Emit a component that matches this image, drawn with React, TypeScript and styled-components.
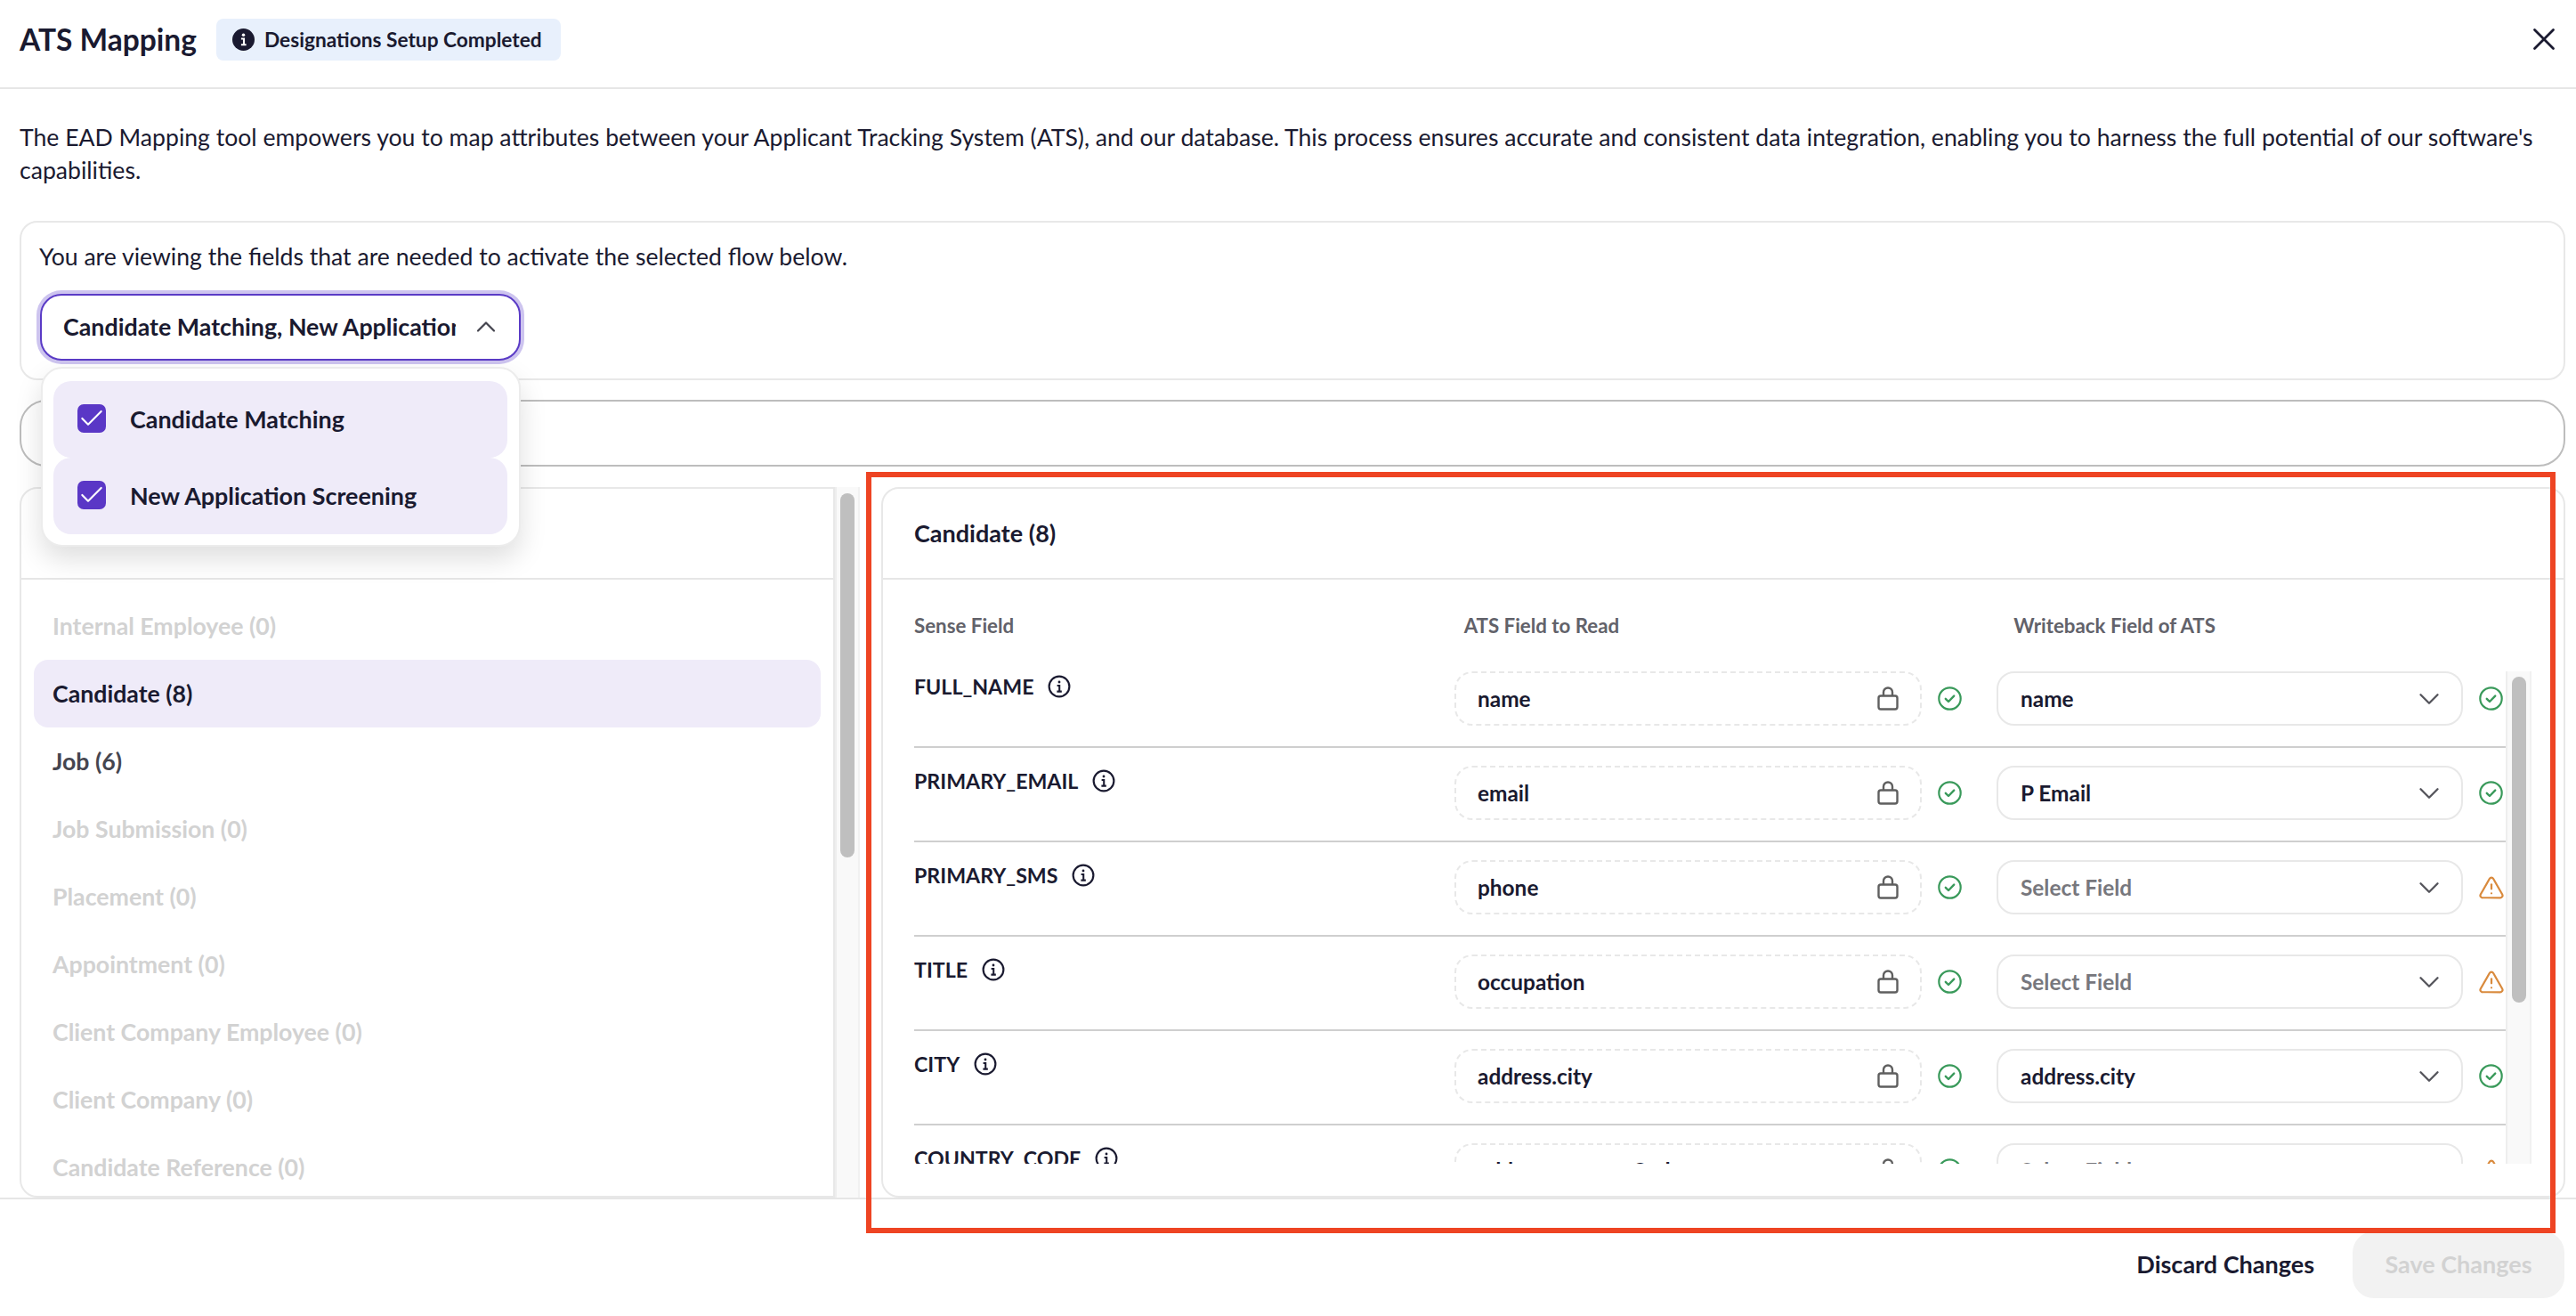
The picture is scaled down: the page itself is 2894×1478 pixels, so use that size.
import React from "react";
import styled, { createGlobalStyle } from "styled-components";
import { X, ChevronUp, ChevronDown, TriangleAlert, Check } from "lucide-react";

const Global = createGlobalStyle`
  html, body { margin: 0; padding: 0; background: #fff; }
  * { box-sizing: border-box; }
  svg { flex: none; }
  body { font-family: "Lato", "Noto Sans", sans-serif; color: #1a1a30; }
`;

const Page = styled.div`
  position: relative;
  width: 2894px;
  height: 1478px;
  display: flex;
  flex-direction: column;
  overflow: hidden;
  background: #fff;
`;

const Header = styled.header`
  flex: 0 0 100px;
  display: flex;
  align-items: center;
  padding: 0 15px 10px 22px;
  border-bottom: 2px solid #e6e6e6;
`;
const Title = styled.h1`
  margin: 0;
  font-size: 33.5px;
  font-weight: 700;
  width: 198px;
  white-space: nowrap;
`;
const Badge = styled.div`
  margin-left: 23px;
  height: 47px;
  width: 387px;
  display: flex;
  align-items: center;
  gap: 11px;
  padding-left: 18px;
  background: #e8f0fc;
  border-radius: 8px;
  font-size: 22.7px;
  font-weight: 700;
  white-space: nowrap;
`;
const CloseButton = styled.button`
  margin-left: auto;
  padding: 0;
  border: 0;
  background: none;
  display: flex;
  color: #1a1a30;
`;

const Intro = styled.p`
  margin: 0;
  padding: 36px 22px 38px;
  font-size: 26.6px;
  line-height: 37px;
`;

const FlowCard = styled.section`
  flex: 0 0 179px;
  margin: 0 12px 0 22px;
  padding: 20px 20px 0;
  border: 2px solid #e8e8e8;
  border-radius: 20px;
`;
const FlowText = styled.div`
  font-size: 26.6px;
  line-height: 37px;
  margin-bottom: 23px;
`;
const Dropdown = styled.div`
  position: relative;
  width: 540px;
  height: 75px;
  margin-left: 1px;
`;
const DropdownTrigger = styled.div`
  height: 100%;
  display: flex;
  align-items: center;
  padding: 0 19px 2px 24px;
  border: 2px solid #5a3bc6;
  border-radius: 24px;
  box-shadow: 0 0 0 4px #cdc4ef;
  background: #fff;
  color: #45454f;
`;
const DropdownValue = styled.span`
  flex: 0 0 441px;
  overflow: hidden;
  white-space: nowrap;
  font-size: 26.8px;
  font-weight: 700;
  color: #1a1a30;
`;
const TriggerChevron = styled.span`
  margin-left: auto;
  display: flex;
`;
const Menu = styled.div`
  position: absolute;
  z-index: 5;
  left: 1px;
  top: 82px;
  width: 539px;
  padding: 14px 13px 12px 12px;
  background: #fff;
  border: 2px solid #ececec;
  border-radius: 24px;
  box-shadow: 0 14px 30px rgba(0, 0, 0, 0.13);
`;
const MenuItem = styled.div`
  height: 86px;
  display: flex;
  align-items: center;
  gap: 27px;
  padding: 0 0 2px 27px;
  background: #efebf9;
  border-radius: 20px;
  font-size: 26.9px;
  font-weight: 700;
`;
const Checkbox = styled.span`
  flex: 0 0 32px;
  height: 32px;
  display: flex;
  align-items: center;
  justify-content: center;
  background: #5a37c6;
  border-radius: 7px;
  color: #fff;
`;

const SearchBox = styled.div`
  flex: 0 0 75px;
  margin: 22px 12px 0 22px;
  border: 2px solid #bdbdbd;
  border-radius: 30px;
`;

const Panels = styled.div`
  flex: 0 0 798px;
  margin: 23px 12px 0 22px;
  display: flex;
  min-height: 0;
`;
const ListPanel = styled.section`
  flex: 0 0 916px;
  border: 2px solid #e8e8e8;
  border-radius: 20px 0 0 20px;
  overflow: hidden;
`;
const PanelHeader = styled.div`
  height: 102px;
  display: flex;
  align-items: center;
  padding: 0 0 2px 35px;
  border-bottom: 2px solid #e6e6e6;
  font-size: 27px;
  font-weight: 700;
`;
const EntityList = styled.div`
  padding: 14px 14px 0;
`;
const Entity = styled.div<{ $state: "idle" | "active" | "off" }>`
  height: 76px;
  display: flex;
  align-items: center;
  padding-left: 21px;
  border-radius: 16px;
  font-size: 26.7px;
  font-weight: 700;
  white-space: nowrap;
  color: ${(p) => (p.$state === "off" ? "#d2d2d2" : p.$state === "idle" ? "#45454f" : "#1a1a30")};
  background: ${(p) => (p.$state === "active" ? "#efebf9" : "transparent")};
`;

const Track = styled.div<{ $width: number }>`
  flex: 0 0 ${(p) => p.$width}px;
  background: #f9f9f9;
  border-left: 2px solid #eeeeee;
  border-right: 2px solid #f1f1f1;
`;
const Thumb = styled.div<{ $top: number; $height: number }>`
  width: 16px;
  height: ${(p) => p.$height}px;
  margin: ${(p) => p.$top}px auto 0;
  border-radius: 8px;
  background: #bfbfbf;
`;

const DetailPanel = styled.section`
  margin-left: 24px;
  flex: 1;
  min-width: 0;
  border: 2px solid #e8e8e8;
  border-radius: 20px;
  overflow: hidden;
`;
const ColumnLabels = styled.div`
  display: grid;
  grid-template-columns: repeat(3, 1fr);
  height: 103px;
  padding: 37px 0 0 35px;
  font-size: 22.3px;
  line-height: 30px;
  font-weight: 700;
  color: #62626a;
`;
const ScrollArea = styled.div`
  display: flex;
  height: 553px;
  overflow: hidden;
  padding-left: 35px;
`;
const Rows = styled.div`
  flex: 0 0 1788px;
`;
const Row = styled.div`
  display: flex;
  align-items: flex-start;
  padding-bottom: 23px;
  margin-bottom: 20px;
  border-bottom: 2px solid #cfcfcf;
`;
const SenseLabel = styled.div`
  flex: 0 0 607px;
  display: flex;
  align-items: center;
  gap: 16px;
  height: 34px;
  font-size: 23.2px;
  font-weight: 700;
`;
const Field = styled.div<{ $locked?: boolean; $width: number }>`
  flex: 0 0 ${(p) => p.$width}px;
  height: 61px;
  display: flex;
  align-items: center;
  justify-content: space-between;
  padding: 0 ${(p) => (p.$locked ? 24 : 17)}px 0 ${(p) => (p.$locked ? 24 : 25)}px;
  border: 2px ${(p) => (p.$locked ? "dashed" : "solid")} #e8e8e8;
  border-radius: 20px;
  color: #55555c;
`;
const FieldValue = styled.span<{ $placeholder?: boolean }>`
  font-size: 24.4px;
  font-weight: 700;
  color: ${(p) => (p.$placeholder ? "#77777d" : "#1a1a30")};
`;
const Status = styled.span<{ $ok: boolean; $right: number; $left: number }>`
  flex: 0 0 27px;
  min-width: 0;
  height: 61px;
  margin: 0 ${(p) => p.$right}px 0 ${(p) => p.$left}px;
  display: flex;
  align-items: center;
  justify-content: center;
  color: ${(p) => (p.$ok ? "#3a9a5b" : "#d98a3d")};
`;

const Footer = styled.footer`
  flex: 1;
  display: flex;
  justify-content: flex-end;
  align-items: flex-start;
  gap: 43px;
  padding: 36px 13px 0 0;
  border-top: 2px solid #e6e6e6;
`;
const DiscardButton = styled.div`
  height: 73px;
  display: flex;
  align-items: center;
  font-size: 27px;
  font-weight: 700;
`;
const SaveButton = styled.div`
  width: 238px;
  height: 75px;
  padding-bottom: 2px;
  display: flex;
  align-items: center;
  justify-content: center;
  background: #f2f2f2;
  border-radius: 24px;
  font-size: 27px;
  font-weight: 700;
  color: #d2d2d2;
`;

const Highlight = styled.div`
  position: absolute;
  z-index: 10;
  left: 973px;
  top: 530px;
  width: 1898px;
  height: 855px;
  border: 6px solid #ee4423;
  pointer-events: none;
`;

const InfoFilled = () => (
  <svg width="25" height="25" viewBox="0 0 24 24" aria-hidden="true">
    <circle cx="12" cy="12" r="12" fill="#1a1a30" />
    <circle cx="12" cy="7" r="1.7" fill="#fff" />
    <path d="M9.5 11h3v6M9.5 17.5h5.5" stroke="#fff" strokeWidth="2" fill="none" />
  </svg>
);
const InfoOutline = () => (
  <svg width="26" height="26" viewBox="0 0 24 24" fill="none" stroke="#1a1a30" aria-hidden="true">
    <circle cx="12" cy="12" r="10.5" strokeWidth="2" />
    <circle cx="12" cy="7.4" r="1.3" fill="#1a1a30" stroke="none" />
    <path d="M9.8 11h2.4v6M9.6 17.2h5" strokeWidth="1.9" />
  </svg>
);
const LockIcon = () => (
  <svg width="24" height="27" viewBox="0 0 24 27" fill="none" stroke="#5f5f5f" strokeWidth="2.4" aria-hidden="true">
    <rect x="1.5" y="10.5" width="21" height="15" rx="2.5" />
    <path d="M7 10.5V6.5a5 5 0 0 1 10 0v4" />
  </svg>
);
const CheckCircleIcon = () => (
  <svg width="27" height="27" viewBox="0 0 27 27" fill="none" stroke="currentColor" aria-hidden="true">
    <circle cx="13.5" cy="13.5" r="12.2" strokeWidth="2.2" />
    <path d="M8.8 13.8l3.2 3.2 6.2-6.4" strokeWidth="2.4" strokeLinecap="round" strokeLinejoin="round" />
  </svg>
);

const entities: { name: string; state: "idle" | "active" | "off" }[] = [
  { name: "Internal Employee (0)", state: "off" },
  { name: "Candidate (8)", state: "active" },
  { name: "Job (6)", state: "idle" },
  { name: "Job Submission (0)", state: "off" },
  { name: "Placement (0)", state: "off" },
  { name: "Appointment (0)", state: "off" },
  { name: "Client Company Employee (0)", state: "off" },
  { name: "Client Company (0)", state: "off" },
  { name: "Candidate Reference (0)", state: "off" },
];

const rows = [
  { sense: "FULL_NAME", ats: "name", write: "name" },
  { sense: "PRIMARY_EMAIL", ats: "email", write: "P Email" },
  { sense: "PRIMARY_SMS", ats: "phone", write: "" },
  { sense: "TITLE", ats: "occupation", write: "" },
  { sense: "CITY", ats: "address.city", write: "address.city" },
  { sense: "COUNTRY_CODE", ats: "address.countryCode", write: "" },
];

const flows = ["Candidate Matching", "New Application Screening"];

export default function App() {
  return (
    <Page>
      <Global />
      <Header>
        <Title>ATS Mapping</Title>
        <Badge>
          <InfoFilled />
          Designations Setup Completed
        </Badge>
        <CloseButton aria-label="Close">
          <X size={42} strokeWidth={1.6} />
        </CloseButton>
      </Header>
      <Intro>
        The EAD Mapping tool empowers you to map attributes between your Applicant Tracking System (ATS), and our
        database. This process ensures accurate and consistent data integration, enabling you to harness the full
        potential of our software's capabilities.
      </Intro>
      <FlowCard>
        <FlowText>You are viewing the fields that are needed to activate the selected flow below.</FlowText>
        <Dropdown>
          <DropdownTrigger>
            <DropdownValue>Candidate Matching, New Application Screening</DropdownValue>
            <TriggerChevron>
              <ChevronUp size={36} strokeWidth={1.5} />
            </TriggerChevron>
          </DropdownTrigger>
          <Menu>
            {flows.map((f) => (
              <MenuItem key={f}>
                <Checkbox>
                  <Check size={32} strokeWidth={1.6} />
                </Checkbox>
                {f}
              </MenuItem>
            ))}
          </Menu>
        </Dropdown>
      </FlowCard>
      <SearchBox />
      <Panels>
        <ListPanel>
          <PanelHeader />
          <EntityList>
            {entities.map((e) => (
              <Entity key={e.name} $state={e.state}>
                {e.name}
              </Entity>
            ))}
          </EntityList>
        </ListPanel>
        <Track $width={28}>
          <Thumb $top={7} $height={409} />
        </Track>
        <DetailPanel>
          <PanelHeader>Candidate (8)</PanelHeader>
          <ColumnLabels>
            <span>Sense Field</span>
            <span>ATS Field to Read</span>
            <span>Writeback Field of ATS</span>
          </ColumnLabels>
          <ScrollArea>
            <Rows>
              {rows.map((r) => (
                <Row key={r.sense}>
                  <SenseLabel>
                    {r.sense}
                    <InfoOutline />
                  </SenseLabel>
                  <Field $locked $width={525}>
                    <FieldValue>{r.ats}</FieldValue>
                    <LockIcon />
                  </Field>
                  <Status $ok $left={18} $right={39}>
                    <CheckCircleIcon />
                  </Status>
                  <Field $width={524}>
                    <FieldValue $placeholder={!r.write}>{r.write || "Select Field"}</FieldValue>
                    <ChevronDown size={38} strokeWidth={1.5} />
                  </Field>
                  <Status $ok={!!r.write} $left={18} $right={3}>
                    {r.write ? <CheckCircleIcon /> : <TriangleAlert size={30} strokeWidth={1.8} />}
                  </Status>
                </Row>
              ))}
            </Rows>
            <Track $width={29}>
              <Thumb $top={6} $height={366} />
            </Track>
          </ScrollArea>
        </DetailPanel>
      </Panels>
      <Footer>
        <DiscardButton>Discard Changes</DiscardButton>
        <SaveButton>Save Changes</SaveButton>
      </Footer>
      <Highlight />
    </Page>
  );
}
